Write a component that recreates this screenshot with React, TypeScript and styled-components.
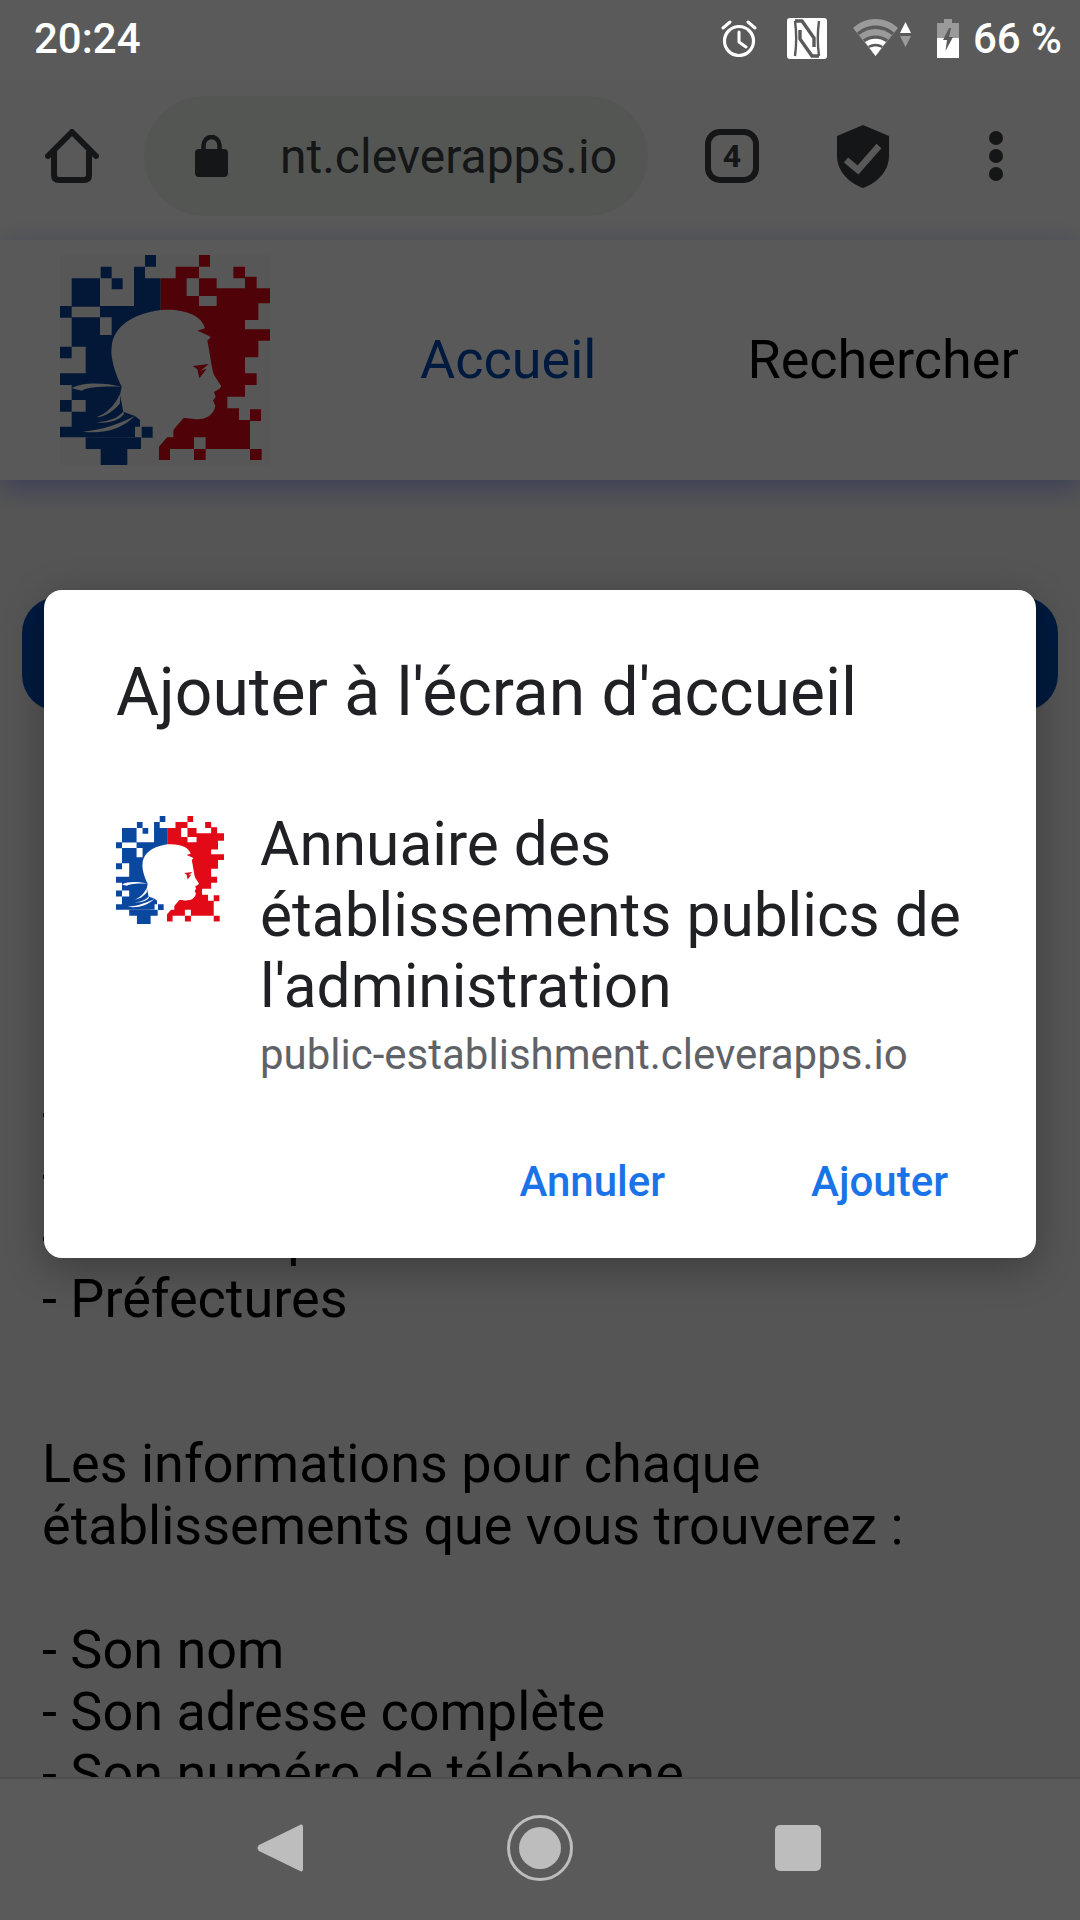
import React from "react";
import styled, { createGlobalStyle } from "styled-components";

const Global = createGlobalStyle`
  html, body { margin: 0; padding: 0; background: #5a5a5a; }
  * { box-sizing: border-box; }
`;

const Screen = styled.div`
  position: relative;
  width: 1080px;
  height: 1920px;
  overflow: hidden;
  display: flex;
  flex-direction: column;
  font-family: Roboto, "Liberation Sans", sans-serif;
  background: #5a5a5a;
`;

const StatusBar = styled.div`
  height: 80px;
  flex: none;
  display: flex;
  align-items: center;
  padding: 0 18px 4px 34px;
  color: #fff;
  font-weight: 500;
`;
const Clock = styled.span`
  font-size: 42px;
  margin-right: auto;
`;
const StatusIcon = styled.svg<{ $gap: number }>`
  display: block;
  flex: none;
  margin-right: ${(p) => p.$gap}px;
`;
const Percent = styled.span`
  font-size: 42px;
  white-space: nowrap;
`;

const Browser = styled.div`
  position: relative;
  flex: 1;
  min-height: 0;
  display: flex;
  flex-direction: column;
  overflow: hidden;
  background: #f4f4f4;
`;
const Dim = styled.div`
  position: absolute;
  inset: 0;
  background: rgba(0, 0, 0, 0.65);
`;

const Toolbar = styled.div`
  height: 160px;
  flex: none;
  display: flex;
  align-items: center;
  padding: 0 0 8px 45px;
  background: #fff;
`;
const ToolIcon = styled.svg<{ $left: number }>`
  display: block;
  flex: none;
  margin-left: ${(p) => p.$left}px;
`;
const UrlPill = styled.div`
  width: 504px;
  height: 120px;
  margin-left: 45px;
  padding-left: 51px;
  border-radius: 60px;
  background: #f1f5f1;
  display: flex;
  align-items: center;
  flex: none;
`;
const UrlText = styled.span`
  margin-left: 52px;
  font-size: 48px;
  color: #3c4043;
  white-space: nowrap;
`;
const TabCount = styled.div`
  margin-left: 57px;
  width: 54px;
  height: 54px;
  flex: none;
  border: 6px solid #3c4043;
  border-radius: 15px;
  display: flex;
  align-items: center;
  justify-content: center;
  font-size: 32px;
  font-weight: 700;
  color: #3c4043;
`;

const SiteHeader = styled.header`
  position: relative;
  height: 240px;
  flex: none;
  display: flex;
  align-items: center;
  padding-left: 60px;
  background: #fff;
  box-shadow: 0 8px 26px rgba(0, 40, 255, 0.32);
`;
const NavLink = styled.span<{ $left: number; $color: string }>`
  margin-left: ${(p) => p.$left}px;
  margin-top: -2px;
  font-size: 54px;
  color: ${(p) => p.$color};
  white-space: nowrap;
`;

const Content = styled.main`
  flex: 1;
  padding: 117px 22px 0;
`;
const CallToAction = styled.div`
  height: 114px;
  border-radius: 36px;
  background: #004ab4;
  margin-bottom: 371px;
`;
const Paragraph = styled.p<{ $after: number }>`
  margin: 0 0 ${(p) => p.$after}px;
  padding-left: 20px;
  font-size: 54px;
  line-height: 62px;
  color: #000;
  white-space: pre-line;
`;

const NavBar = styled.nav`
  height: 143px;
  flex: none;
  display: flex;
  align-items: center;
  justify-content: center;
  padding-bottom: 4px;
  border-top: 2px solid #4e4e4e;
  background: #5a5a5a;
`;
const NavSlot = styled.div`
  width: 258px;
  display: flex;
  justify-content: center;
`;

const Dialog = styled.section`
  position: absolute;
  left: 44px;
  top: 590px;
  width: 992px;
  height: 668px;
  padding: 63px 72px 0 72px;
  border-radius: 18px;
  background: #fff;
  box-shadow: 0 10px 40px rgba(0, 0, 0, 0.3);
`;
const Title = styled.h2`
  margin: 0;
  font-size: 66px;
  line-height: 80px;
  font-weight: 400;
  color: #202124;
  white-space: nowrap;
`;
const AppRow = styled.div`
  margin-top: 76px;
  display: flex;
`;
const AppLogo = styled.div`
  width: 108px;
  flex: none;
  margin: 7px 36px 0 0;
`;
const AppName = styled.div`
  font-size: 60.4px;
  line-height: 71px;
  color: #202124;
`;
const AppUrl = styled.div`
  margin-top: 5px;
  font-size: 42px;
  line-height: 56px;
  color: #5f6368;
  white-space: nowrap;
`;
const Actions = styled.div`
  margin-top: 71px;
  display: flex;
  justify-content: flex-end;
  gap: 146px;
  padding-right: 16px;
`;
const ActionButton = styled.span`
  font-size: 42px;
  line-height: 56px;
  font-weight: 500;
  color: #1a73e8;
`;

const toPath = (rects: number[][]) =>
  rects.map((r) => `M${r[0]} ${r[1]}h${r[2]}v${r[3]}h${-r[2]}z`).join("");

const BLUE = toPath([
  [315,45,33,35],[182,80,33,35],[282,80,33,35],[282,115,80,95],[95,115,85,85],[215,115,33,33],
  [60,198,35,35],[180,198,182,34],[95,232,85,53],[215,232,147,53],[95,285,267,35],[137,320,225,80],
  [60,320,35,35],[60,400,300,35],[95,435,205,45],[60,480,35,35],[137,480,163,35],[95,515,205,45],[60,560,225,32],
]);
const BLUE_TOP = toPath([[305,560,33,33],[137,592,166,35],[182,627,80,48]]);
const RED = toPath([
  [477,45,33,35],[407,80,70,35],[580,80,35,35],[362,115,78,53],[477,115,53,30],[615,110,35,35],
  [477,145,213,23],[362,168,115,30],[530,168,160,22],[530,190,125,8],[362,198,293,42],[362,240,253,28],
  [362,268,328,34],[362,302,293,50],[362,352,253,48],[362,400,288,35],[362,435,253,35],[362,470,200,35],
  [362,505,235,35],[630,508,33,35],[400,540,230,52],[357,592,105,35],[497,592,133,35],
  [357,627,33,33],[462,627,35,33],[630,627,35,33],
]);
const FACE =
  "M362 210C430 205 485 225 495 265L472 272C490 280 505 285 512 292L502 302C510 340 515 385 522 405L543 437C545 445 530 450 522 456L527 470L519 482L526 497C522 520 505 535 480 537C460 540 440 532 430 535L357 620V675H262V592H300V540L285 528L250 515L240 465L245 440C225 400 210 350 215 320C220 270 260 225 362 210Z";

const Marianne: React.FC<{ size: number; paper: string }> = ({ size, paper }) => (
  <svg width={size} height={size} viewBox="60 45 630 630" style={{ display: "block" }}>
    <rect x="60" y="45" width="630" height="630" fill={paper} />
    <path d={BLUE} fill="#0a479f" />
    <path d={RED} fill="#e30a17" />
    <path d={FACE} fill={paper} />
    <path d={BLUE_TOP} fill="#0a479f" />
    <path d="M95 444C130 425 195 428 245 440C200 438 140 440 125 452C115 450 105 447 95 444Z" fill={paper} />
    <path d="M240 463C222 500 200 520 170 532C195 532 225 510 240 490Z" fill={paper} />
    <path d="M250 514C235 535 205 545 170 547C205 552 240 540 252 522Z" fill={paper} />
    <path d="M285 528C240 550 190 570 128 575C190 582 240 570 285 528Z" fill={paper} />
    <path d="M458 378L506 372L482 392L500 386L478 415L472 388Z" fill="#e30a17" />
  </svg>
);

export default function App() {
  return (
    <Screen>
      <Global />
      <StatusBar>
        <Clock>20:24</Clock>
        <StatusIcon $gap={30} width="36" height="38" viewBox="0 0 36 38">
          <circle cx="18" cy="22" r="14.5" fill="none" stroke="#fff" strokeWidth="3.2" />
          <path d="M18 13V23L25 28M2 9L9 3M34 9L27 3" fill="none" stroke="#fff" strokeWidth="3" strokeLinecap="round" strokeLinejoin="round" />
        </StatusIcon>
        <StatusIcon $gap={26} width="40" height="41" viewBox="0 0 40 41">
          <rect width="40" height="41" rx="3" fill="#fff" />
          <path d="M8 3H15L27 20V29M32 38H25L13 21V12" fill="none" stroke="#5a5a5a" strokeWidth="3.4" />
          <path d="M8 3C9.500 14 9.500 27 8 38M32 38C30.500 27 30.500 14 32 3" fill="none" stroke="#5a5a5a" strokeWidth="2.4" />
        </StatusIcon>
        <StatusIcon $gap={26} width="58" height="38" viewBox="0 0 58 38">
          <path d="M0 9C13 -3 32 -3 45 9L22.5 37Z" fill="#9a9a9a" />
          <path d="M4 13.500C15 4 30 4 41 13.500L22.500 37Z" fill="#5a5a5a" />
          <path d="M6 16C16 8 29 8 39 16L22.500 37Z" fill="#9a9a9a" />
          <path d="M10 20.500C17 15 28 15 35 20.500L22.500 37Z" fill="#5a5a5a" />
          <path d="M12 23C18 18.500 27 18.500 33 23L22.500 37Z" fill="#fff" />
          <path d="M15 27C20 24 25 24 30 27L22.500 37Z" fill="#5a5a5a" />
          <path d="M16.500 29C20 27 25 27 28.500 29L22.500 37Z" fill="#fff" />
          <path d="M47 14L52.500 3L58 14Z" fill="#fff" />
          <path d="M47 17L52.500 28L58 17Z" fill="#9a9a9a" />
        </StatusIcon>
        <StatusIcon $gap={14} width="22" height="39" viewBox="0 0 22 39">
          <path d="M7 0H15V4H22V19H0V4H7Z" fill="#9a9a9a" />
          <path d="M0 19H22V39H0Z" fill="#fff" />
          <path d="M12 9L6 21H10L8.500 32L16 18H12L14 9Z" fill="#5a5a5a" />
        </StatusIcon>
        <Percent>66 %</Percent>
      </StatusBar>

      <Browser>
        <Toolbar>
          <ToolIcon $left={0} width="54" height="54" viewBox="0 0 54 54">
            <path d="M3 27L27 3L51 27" fill="none" stroke="#3c4043" strokeWidth="6" strokeLinecap="round" strokeLinejoin="round" />
            <path d="M9 22V46Q9 51 14 51H39Q44 51 44 46V22" fill="none" stroke="#3c4043" strokeWidth="6" />
          </ToolIcon>
          <UrlPill>
            <svg width="33" height="42" viewBox="0 0 33 42" style={{ display: "block", flex: "none" }}>
              <path d="M8.500 17V10.500A8 8.500 0 0 1 24.500 10.500V17" fill="none" stroke="#3c4043" strokeWidth="4.500" />
              <rect y="14" width="33" height="28" rx="4" fill="#3c4043" />
            </svg>
            <UrlText>nt.cleverapps.io</UrlText>
          </UrlPill>
          <TabCount>4</TabCount>
          <ToolIcon $left={78} width="52" height="63" viewBox="0 0 52 63">
            <path d="M26 0L52 11V31C52 46 40 58 26 63C12 58 0 46 0 31V11Z" fill="#3c4043" />
            <path d="M9 35L21 45L42 21" fill="none" stroke="#fff" strokeWidth="6.500" />
          </ToolIcon>
          <ToolIcon $left={100} width="14" height="50" viewBox="0 0 14 50">
            <circle cx="7" cy="7" r="7" fill="#3c4043" />
            <circle cx="7" cy="25" r="7" fill="#3c4043" />
            <circle cx="7" cy="43" r="7" fill="#3c4043" />
          </ToolIcon>
        </Toolbar>
        <SiteHeader>
          <Marianne size={210} paper="#f9f9f9" />
          <NavLink $left={150} $color="#004ab4">Accueil</NavLink>
          <NavLink $left={151} $color="#000">Rechercher</NavLink>
        </SiteHeader>
        <Content>
          <CallToAction />
          <Paragraph $after={41}>{"- Mairies\n- Ambassades\n- Services publics\n- Préfectures"}</Paragraph>
          <Paragraph $after={62}>{"\nLes informations pour chaque\nétablissements que vous trouverez :"}</Paragraph>
          <Paragraph $after={0}>{"- Son nom\n- Son adresse complète\n- Son numéro de téléphone"}</Paragraph>
        </Content>
        <Dim />
      </Browser>

      <NavBar>
        <NavSlot>
          <svg width="50" height="50" viewBox="0 0 50 50">
            <path d="M43 2C45 1 46 2 46 4V46C46 48 45 49 43 48L2 28C0 26 0 24 2 22Z" fill="#bdbdbd" />
          </svg>
        </NavSlot>
        <NavSlot>
          <svg width="66" height="66" viewBox="0 0 66 66">
            <circle cx="33" cy="33" r="31.500" fill="none" stroke="#bdbdbd" strokeWidth="3" />
            <circle cx="33" cy="33" r="21" fill="#bdbdbd" />
          </svg>
        </NavSlot>
        <NavSlot>
          <svg width="46" height="46" viewBox="0 0 46 46">
            <rect width="46" height="46" rx="5" fill="#bdbdbd" />
          </svg>
        </NavSlot>
      </NavBar>

      <Dialog>
        <Title>Ajouter à l'écran d'accueil</Title>
        <AppRow>
          <AppLogo><Marianne size={108} paper="#fff" /></AppLogo>
          <div>
            <AppName>Annuaire des<br />établissements publics de<br />l'administration</AppName>
            <AppUrl>public-establishment.cleverapps.io</AppUrl>
          </div>
        </AppRow>
        <Actions>
          <ActionButton>Annuler</ActionButton>
          <ActionButton>Ajouter</ActionButton>
        </Actions>
      </Dialog>
    </Screen>
  );
}
